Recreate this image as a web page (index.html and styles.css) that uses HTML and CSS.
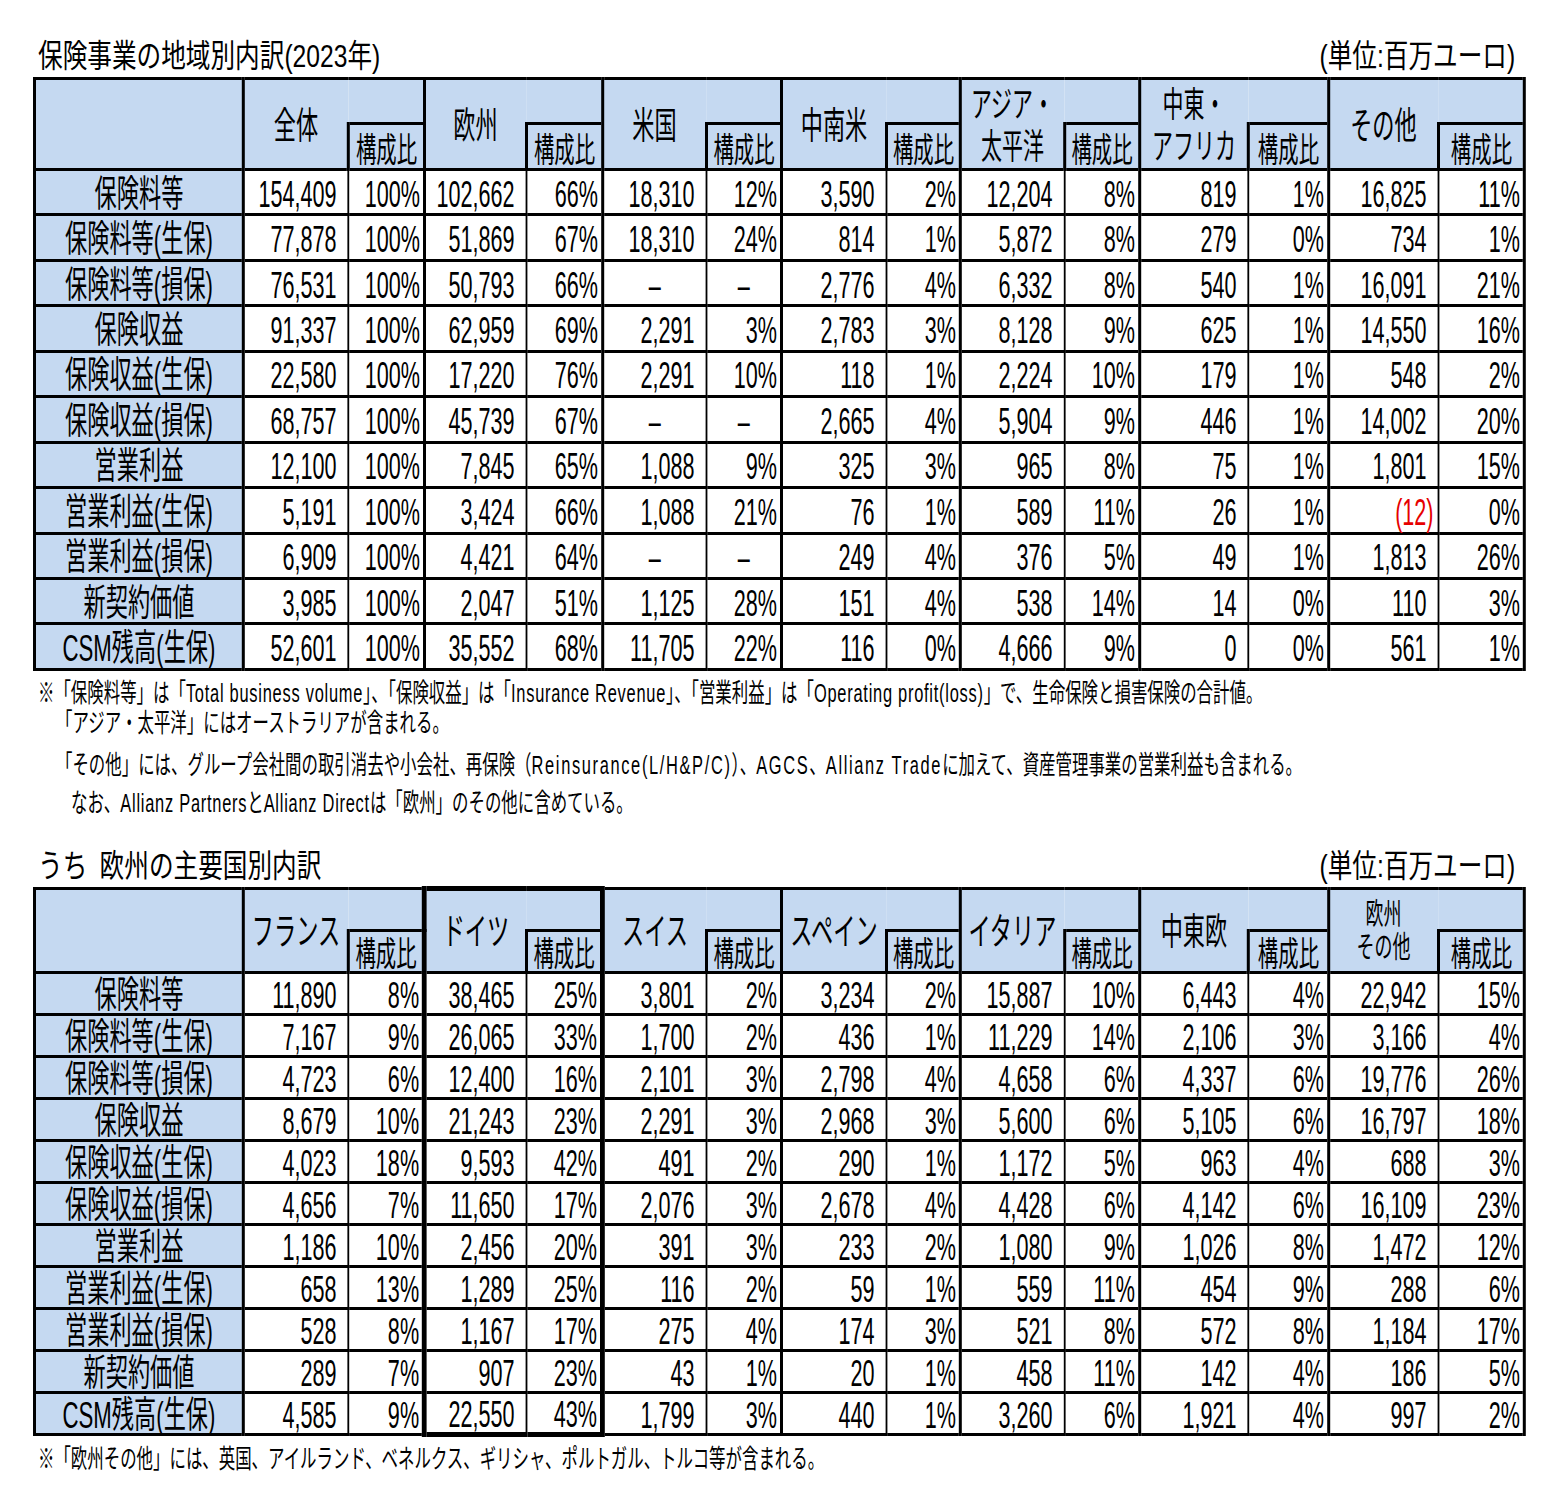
FILE: index.html
```html
<!DOCTYPE html>
<html lang="ja">
<head>
<meta charset="utf-8">
<title>保険事業の地域別内訳</title>
<link rel="stylesheet" href="styles.css">
</head>
<body>
<div class="page">

  <div class="caption first">
    <span class="ttl">保険事業の地域別内訳(2023年)</span>
    <span class="unit">(単位:百万ユーロ)</span>
  </div>

  <table class="sheet t1">
    <colgroup>
      <col class="w-lb"><col class="w-a"><col class="w-ar"><col class="w-b"><col class="w-br"><col class="w-c"><col class="w-cr"><col class="w-d"><col class="w-dr"><col class="w-e"><col class="w-er"><col class="w-f"><col class="w-fr"><col class="w-g"><col class="w-gr">
    </colgroup>
    <thead>
      <tr class="h1">
        <th class="corner" rowspan="2"></th>
        <th class="rg" rowspan="2">全体</th><th class="bl"></th>
        <th class="rg" rowspan="2">欧州</th><th class="bl"></th>
        <th class="rg" rowspan="2">米国</th><th class="bl"></th>
        <th class="rg" rowspan="2">中南米</th><th class="bl"></th>
        <th class="rg two" rowspan="2">アジア・<br>太平洋</th><th class="bl"></th>
        <th class="rg two" rowspan="2">中東・<br>アフリカ</th><th class="bl"></th>
        <th class="rg" rowspan="2">その他</th><th class="bl"></th>
      </tr>
      <tr class="h2">
        <th class="rh">構成比</th><th class="rh">構成比</th><th class="rh">構成比</th><th class="rh">構成比</th><th class="rh">構成比</th><th class="rh">構成比</th><th class="rh">構成比</th>
      </tr>
    </thead>
    <tbody>
      <tr><th class="lb">保険料等</th><td class="v">154,409</td><td class="r">100%</td><td class="v">102,662</td><td class="r">66%</td><td class="v">18,310</td><td class="r">12%</td><td class="v">3,590</td><td class="r">2%</td><td class="v">12,204</td><td class="r">8%</td><td class="v">819</td><td class="r">1%</td><td class="v">16,825</td><td class="r">11%</td></tr>
      <tr><th class="lb">保険料等(生保)</th><td class="v">77,878</td><td class="r">100%</td><td class="v">51,869</td><td class="r">67%</td><td class="v">18,310</td><td class="r">24%</td><td class="v">814</td><td class="r">1%</td><td class="v">5,872</td><td class="r">8%</td><td class="v">279</td><td class="r">0%</td><td class="v">734</td><td class="r">1%</td></tr>
      <tr><th class="lb">保険料等(損保)</th><td class="v">76,531</td><td class="r">100%</td><td class="v">50,793</td><td class="r">66%</td><td class="v dash">–</td><td class="r dash">–</td><td class="v">2,776</td><td class="r">4%</td><td class="v">6,332</td><td class="r">8%</td><td class="v">540</td><td class="r">1%</td><td class="v">16,091</td><td class="r">21%</td></tr>
      <tr><th class="lb">保険収益</th><td class="v">91,337</td><td class="r">100%</td><td class="v">62,959</td><td class="r">69%</td><td class="v">2,291</td><td class="r">3%</td><td class="v">2,783</td><td class="r">3%</td><td class="v">8,128</td><td class="r">9%</td><td class="v">625</td><td class="r">1%</td><td class="v">14,550</td><td class="r">16%</td></tr>
      <tr><th class="lb">保険収益(生保)</th><td class="v">22,580</td><td class="r">100%</td><td class="v">17,220</td><td class="r">76%</td><td class="v">2,291</td><td class="r">10%</td><td class="v">118</td><td class="r">1%</td><td class="v">2,224</td><td class="r">10%</td><td class="v">179</td><td class="r">1%</td><td class="v">548</td><td class="r">2%</td></tr>
      <tr><th class="lb">保険収益(損保)</th><td class="v">68,757</td><td class="r">100%</td><td class="v">45,739</td><td class="r">67%</td><td class="v dash">–</td><td class="r dash">–</td><td class="v">2,665</td><td class="r">4%</td><td class="v">5,904</td><td class="r">9%</td><td class="v">446</td><td class="r">1%</td><td class="v">14,002</td><td class="r">20%</td></tr>
      <tr><th class="lb">営業利益</th><td class="v">12,100</td><td class="r">100%</td><td class="v">7,845</td><td class="r">65%</td><td class="v">1,088</td><td class="r">9%</td><td class="v">325</td><td class="r">3%</td><td class="v">965</td><td class="r">8%</td><td class="v">75</td><td class="r">1%</td><td class="v">1,801</td><td class="r">15%</td></tr>
      <tr><th class="lb">営業利益(生保)</th><td class="v">5,191</td><td class="r">100%</td><td class="v">3,424</td><td class="r">66%</td><td class="v">1,088</td><td class="r">21%</td><td class="v">76</td><td class="r">1%</td><td class="v">589</td><td class="r">11%</td><td class="v">26</td><td class="r">1%</td><td class="v"><span class="neg">(12)</span></td><td class="r">0%</td></tr>
      <tr><th class="lb">営業利益(損保)</th><td class="v">6,909</td><td class="r">100%</td><td class="v">4,421</td><td class="r">64%</td><td class="v dash">–</td><td class="r dash">–</td><td class="v">249</td><td class="r">4%</td><td class="v">376</td><td class="r">5%</td><td class="v">49</td><td class="r">1%</td><td class="v">1,813</td><td class="r">26%</td></tr>
      <tr><th class="lb">新契約価値</th><td class="v">3,985</td><td class="r">100%</td><td class="v">2,047</td><td class="r">51%</td><td class="v">1,125</td><td class="r">28%</td><td class="v">151</td><td class="r">4%</td><td class="v">538</td><td class="r">14%</td><td class="v">14</td><td class="r">0%</td><td class="v">110</td><td class="r">3%</td></tr>
      <tr><th class="lb">CSM残高(生保)</th><td class="v">52,601</td><td class="r">100%</td><td class="v">35,552</td><td class="r">68%</td><td class="v">11,705</td><td class="r">22%</td><td class="v">116</td><td class="r">0%</td><td class="v">4,666</td><td class="r">9%</td><td class="v">0</td><td class="r">0%</td><td class="v">561</td><td class="r">1%</td></tr>
    </tbody>
  </table>

  <div class="notes">
    <p class="n1">※「保険料等」は「<span class="en">Total business volume</span>」、「保険収益」は「<span class="en">Insurance Revenue</span>」、「営業利益」は「<span class="en">Operating profit(loss)</span>」で、生命保険と損害保険の合計値。</p>
    <p class="n2">「アジア・太平洋」にはオーストラリアが含まれる。</p>
    <p class="n3">「その他」には、グループ会社間の取引消去や小会社、再保険（<span class="en wide">Reinsurance(L/H&amp;P/C)</span>）、<span class="en wide">AGCS</span>、<span class="en wide">Allianz Trade</span>に加えて、資産管理事業の営業利益も含まれる。</p>
    <p class="n4">なお、<span class="en">Allianz Partners</span>と<span class="en">Allianz Direct</span>は「欧州」のその他に含めている。</p>
  </div>

  <div class="caption second">
    <span class="ttl">うち&ensp;欧州の主要国別内訳</span>
    <span class="unit">(単位:百万ユーロ)</span>
  </div>

  <table class="sheet t2">
    <colgroup>
      <col class="w-lb"><col class="w-a"><col class="w-ar"><col class="w-b"><col class="w-br"><col class="w-c"><col class="w-cr"><col class="w-d"><col class="w-dr"><col class="w-e"><col class="w-er"><col class="w-f"><col class="w-fr"><col class="w-g"><col class="w-gr">
    </colgroup>
    <thead>
      <tr class="h1">
        <th class="corner" rowspan="2"></th>
        <th class="rg" rowspan="2">フランス</th><th class="bl"></th>
        <th class="rg de" rowspan="2">ドイツ</th><th class="bl de"></th>
        <th class="rg" rowspan="2">スイス</th><th class="bl"></th>
        <th class="rg" rowspan="2">スペイン</th><th class="bl"></th>
        <th class="rg" rowspan="2">イタリア</th><th class="bl"></th>
        <th class="rg" rowspan="2">中東欧</th><th class="bl"></th>
        <th class="rg small" rowspan="2">欧州<br>その他</th><th class="bl"></th>
      </tr>
      <tr class="h2">
        <th class="rh">構成比</th><th class="rh de">構成比</th><th class="rh">構成比</th><th class="rh">構成比</th><th class="rh">構成比</th><th class="rh">構成比</th><th class="rh">構成比</th>
      </tr>
    </thead>
    <tbody>
      <tr><th class="lb">保険料等</th><td class="v">11,890</td><td class="r">8%</td><td class="v de">38,465</td><td class="r de">25%</td><td class="v">3,801</td><td class="r">2%</td><td class="v">3,234</td><td class="r">2%</td><td class="v">15,887</td><td class="r">10%</td><td class="v">6,443</td><td class="r">4%</td><td class="v">22,942</td><td class="r">15%</td></tr>
      <tr><th class="lb">保険料等(生保)</th><td class="v">7,167</td><td class="r">9%</td><td class="v de">26,065</td><td class="r de">33%</td><td class="v">1,700</td><td class="r">2%</td><td class="v">436</td><td class="r">1%</td><td class="v">11,229</td><td class="r">14%</td><td class="v">2,106</td><td class="r">3%</td><td class="v">3,166</td><td class="r">4%</td></tr>
      <tr><th class="lb">保険料等(損保)</th><td class="v">4,723</td><td class="r">6%</td><td class="v de">12,400</td><td class="r de">16%</td><td class="v">2,101</td><td class="r">3%</td><td class="v">2,798</td><td class="r">4%</td><td class="v">4,658</td><td class="r">6%</td><td class="v">4,337</td><td class="r">6%</td><td class="v">19,776</td><td class="r">26%</td></tr>
      <tr><th class="lb">保険収益</th><td class="v">8,679</td><td class="r">10%</td><td class="v de">21,243</td><td class="r de">23%</td><td class="v">2,291</td><td class="r">3%</td><td class="v">2,968</td><td class="r">3%</td><td class="v">5,600</td><td class="r">6%</td><td class="v">5,105</td><td class="r">6%</td><td class="v">16,797</td><td class="r">18%</td></tr>
      <tr><th class="lb">保険収益(生保)</th><td class="v">4,023</td><td class="r">18%</td><td class="v de">9,593</td><td class="r de">42%</td><td class="v">491</td><td class="r">2%</td><td class="v">290</td><td class="r">1%</td><td class="v">1,172</td><td class="r">5%</td><td class="v">963</td><td class="r">4%</td><td class="v">688</td><td class="r">3%</td></tr>
      <tr><th class="lb">保険収益(損保)</th><td class="v">4,656</td><td class="r">7%</td><td class="v de">11,650</td><td class="r de">17%</td><td class="v">2,076</td><td class="r">3%</td><td class="v">2,678</td><td class="r">4%</td><td class="v">4,428</td><td class="r">6%</td><td class="v">4,142</td><td class="r">6%</td><td class="v">16,109</td><td class="r">23%</td></tr>
      <tr><th class="lb">営業利益</th><td class="v">1,186</td><td class="r">10%</td><td class="v de">2,456</td><td class="r de">20%</td><td class="v">391</td><td class="r">3%</td><td class="v">233</td><td class="r">2%</td><td class="v">1,080</td><td class="r">9%</td><td class="v">1,026</td><td class="r">8%</td><td class="v">1,472</td><td class="r">12%</td></tr>
      <tr><th class="lb">営業利益(生保)</th><td class="v">658</td><td class="r">13%</td><td class="v de">1,289</td><td class="r de">25%</td><td class="v">116</td><td class="r">2%</td><td class="v">59</td><td class="r">1%</td><td class="v">559</td><td class="r">11%</td><td class="v">454</td><td class="r">9%</td><td class="v">288</td><td class="r">6%</td></tr>
      <tr><th class="lb">営業利益(損保)</th><td class="v">528</td><td class="r">8%</td><td class="v de">1,167</td><td class="r de">17%</td><td class="v">275</td><td class="r">4%</td><td class="v">174</td><td class="r">3%</td><td class="v">521</td><td class="r">8%</td><td class="v">572</td><td class="r">8%</td><td class="v">1,184</td><td class="r">17%</td></tr>
      <tr><th class="lb">新契約価値</th><td class="v">289</td><td class="r">7%</td><td class="v de">907</td><td class="r de">23%</td><td class="v">43</td><td class="r">1%</td><td class="v">20</td><td class="r">1%</td><td class="v">458</td><td class="r">11%</td><td class="v">142</td><td class="r">4%</td><td class="v">186</td><td class="r">5%</td></tr>
      <tr class="last"><th class="lb">CSM残高(生保)</th><td class="v">4,585</td><td class="r">9%</td><td class="v de">22,550</td><td class="r de">43%</td><td class="v">1,799</td><td class="r">3%</td><td class="v">440</td><td class="r">1%</td><td class="v">3,260</td><td class="r">6%</td><td class="v">1,921</td><td class="r">4%</td><td class="v">997</td><td class="r">2%</td></tr>
    </tbody>
  </table>

  <div class="notes">
    <p class="n5">※「欧州その他」には、英国、アイルランド、ベネルクス、ギリシャ、ポルトガル、トルコ等が含まれる。</p>
  </div>

</div>
</body>
</html>
```
FILE: styles.css
```css
:root {
  --sx: 0.6;    /* horizontal condensing of the sheet text */
  --nx: 0.632;  /* condensing of the notes */
  --tx: 0.77;   /* condensing of the captions */
  --blue: #c5d9f1;
  --line: #000;
}

body {
  margin: 0;
  background: #fff;
  color: #000;
  font-family: "Liberation Sans", "Noto Sans CJK JP", sans-serif;
}

.page {
  width: 1560px;
  padding-left: 33px;
  box-sizing: border-box;
}

/* captions above each table */
.caption {
  width: 1490px;
  height: 40px;
  display: flex;
  justify-content: space-between;
  align-items: center;
}
.caption.first { margin-top: 36px; margin-bottom: 1px; }
.caption.second { margin-top: 28px; margin-bottom: 0; }

.ttl,
.unit {
  display: inline-block;
  font-size: 32px;
  line-height: 40px;
  white-space: nowrap;
  transform: scaleX(var(--tx));
}
.ttl { transform-origin: left center; margin-left: 5px; }
.unit { transform-origin: right center; margin-right: 8px; }

/* spreadsheet table */
.sheet {
  border-collapse: collapse;
  table-layout: fixed;
  width: calc(1490px / var(--sx));
  transform: scaleX(var(--sx));
  transform-origin: 0 0;
  font-size: 36px;
  line-height: 30px;
}

.w-lb { width: calc(209px / var(--sx)); }
.w-a  { width: calc(105px / var(--sx)); }
.w-ar { width: calc(76px / var(--sx)); }
.w-b  { width: calc(102px / var(--sx)); }
.w-br { width: calc(76px / var(--sx)); }
.w-c  { width: calc(104px / var(--sx)); }
.w-cr { width: calc(75px / var(--sx)); }
.w-d  { width: calc(105px / var(--sx)); }
.w-dr { width: calc(74px / var(--sx)); }
.w-e  { width: calc(104px / var(--sx)); }
.w-er { width: calc(75px / var(--sx)); }
.w-f  { width: calc(109px / var(--sx)); }
.w-fr { width: calc(80px / var(--sx)); }
.w-g  { width: calc(110px / var(--sx)); }
.w-gr { width: calc(86px / var(--sx)); }

.sheet th,
.sheet td {
  border-style: solid;
  border-color: var(--line);
  border-width: 3px 5px;
  padding: 0;
  white-space: nowrap;
  font-weight: normal;
  vertical-align: middle;
}

.t1 .h1 { height: 45px; }
.t1 .h2 { height: 46px; }
.t1 tbody tr { height: 45.45px; }

.t2 .h1 { height: 42px; }
.t2 .h2 { height: 42px; }
.t2 tbody tr { height: 42px; }

/* header cells */
.sheet .corner { background: var(--blue); }
.sheet .rg {
  background: var(--blue);
  text-align: center;
  font-size: 37px;
  line-height: 41px;
  padding-top: 4px;
  border-right-style: none;
}
.sheet .rg.two { font-size: 35px; line-height: 42px; }
.sheet .rg.small { font-size: 30px; line-height: 33px; padding-top: 0; }
.sheet .bl {
  background: var(--blue);
  border-left-style: none;
  border-bottom-style: none;
}
.sheet .rh {
  background: var(--blue);
  text-align: center;
  font-size: 34px;
  padding-top: 6px;
}

/* body cells */
.sheet .lb {
  background: var(--blue);
  text-align: center;
  font-size: 37px;
  padding-top: 5px;
}
.sheet .v {
  text-align: right;
  padding: 5px calc(11px / var(--sx)) 0 0;
  border-right-width: 3px;
}
.sheet .r {
  text-align: right;
  padding: 5px calc(3px / var(--sx)) 0 0;
  border-left-width: 3px;
}
.sheet .dash {
  text-align: center;
  padding-right: 0;
}
.neg {
  color: #e60000;
  margin-right: calc(-7px / var(--sx));
}

/* emphasised Germany column */
.sheet .rg.de { border-left-width: 8px; border-top-width: 5px; }
.sheet .bl.de { border-top-width: 5px; border-right-width: 8px; }
.sheet .rh.de { border-right-width: 8px; }
.sheet .v.de { border-left-width: 8px; }
.sheet .r.de { border-right-width: 8px; }
.sheet .last .de { border-bottom-width: 5px; }

/* footnotes */
.notes {
  transform: scaleX(var(--nx));
  transform-origin: 0 0;
  white-space: nowrap;
  font-size: 26px;
  line-height: 30px;
}
.notes p { margin: 0; }
.notes .en { letter-spacing: 0.045em; }
.notes .en.wide { letter-spacing: 0.1em; }
.notes .n1 { margin-top: 7px; padding-left: calc(5px / var(--nx)); }
.notes .n2 { padding-left: calc(23px / var(--nx)); }
.notes .n3 { margin-top: 12px; padding-left: calc(23px / var(--nx)); }
.notes .n4 { margin-top: 8px; padding-left: calc(38px / var(--nx)); }
.notes .n5 { margin-top: 7px; padding-left: calc(5px / var(--nx)); }
```
